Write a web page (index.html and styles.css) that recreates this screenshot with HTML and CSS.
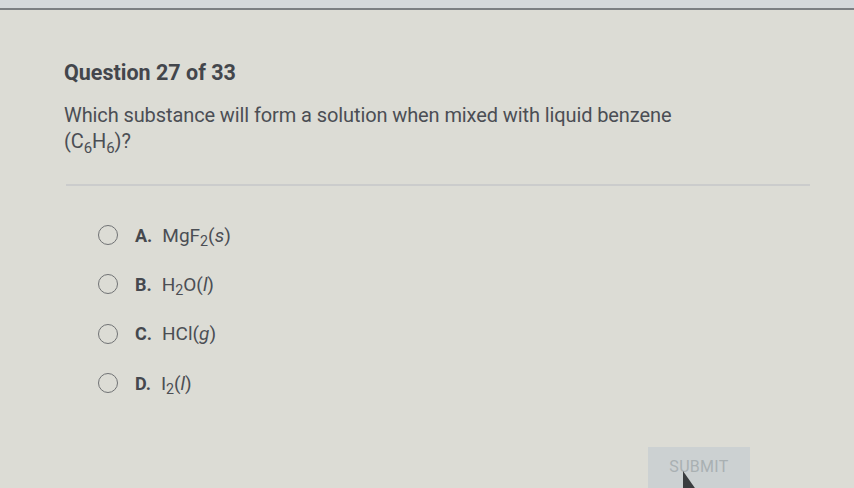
FILE: index.html
```html
<!DOCTYPE html>
<html>
<head>
<meta charset="utf-8">
<link rel="stylesheet" href="styles.css">
</head>
<body>
<div class="topbar"></div>
<main class="page">
  <h1 class="title">Question 27 of 33</h1>
  <p class="prompt">Which substance will form a solution when mixed with liquid benzene<br>(C<sub>6</sub>H<sub>6</sub>)?</p>
  <hr class="divider">
  <ul class="options">
    <li class="option"><span class="radio"></span><span class="letter">A.</span><span class="answer">MgF<sub>2</sub>(<i>s</i>)</span></li>
    <li class="option"><span class="radio"></span><span class="letter">B.</span><span class="answer">H<sub>2</sub>O(<i>l</i>)</span></li>
    <li class="option"><span class="radio"></span><span class="letter">C.</span><span class="answer">HCl(<i>g</i>)</span></li>
    <li class="option"><span class="radio"></span><span class="letter">D.</span><span class="answer">I<sub>2</sub>(<i>l</i>)</span></li>
  </ul>
  <div class="footer">
    <div class="submit-wrap">
      <button class="submit">SUBMIT</button>
      <svg class="cursor" width="22" height="20" viewBox="0 0 22 20"><path d="M2 0 L2 20 L16 20 Z" fill="#3a3d3f"/></svg>
    </div>
  </div>
</main>
</body>
</html>
```

FILE: styles.css
```css
html, body {
  margin: 0;
  padding: 0;
}
body {
  width: 854px;
  height: 488px;
  overflow: hidden;
  background: #dcdcd5;
  font-family: Roboto, "Liberation Sans", sans-serif;
  color: #4a4d52;
}
.topbar {
  height: 8px;
  background: #d4d8db;
  border-bottom: 2px solid #7b7f83;
}
.page {
  padding: 50px 0 0 64px;
}
.title {
  margin: 0;
  font-size: 21.5px;
  line-height: 26px;
  font-weight: 700;
  color: #43464c;
}
.prompt {
  margin: 16px 0 0 0;
  font-size: 20px;
  line-height: 26px;
  color: #4b4e54;
  letter-spacing: -0.1px;
}
sub {
  font-size: 0.75em;
  line-height: 0;
  vertical-align: -0.3em;
}
.divider {
  margin: 30px 0 0 2px;
  width: 744px;
  border: 0;
  border-top: 2px solid #cbcccc;
  height: 0;
}
.options {
  list-style: none;
  margin: 39px 0 0 0;
  padding: 0 0 0 34px;
  display: flex;
  flex-direction: column;
  gap: 29.4px;
}
.option {
  display: flex;
  align-items: center;
  height: 20px;
  font-size: 19px;
}
.radio {
  width: 18px;
  height: 18px;
  border: 1.6px solid #707274;
  border-radius: 50%;
  margin-right: 17px;
  box-sizing: content-box;
}
.letter {
  font-weight: 700;
  font-size: 18px;
  color: #45484e;
  margin-right: 10px;
}
.answer {
  color: #4b4e54;
}
.footer {
  display: flex;
  justify-content: flex-end;
  padding-right: 104px;
  margin-top: 54px;
}
.submit-wrap {
  position: relative;
}
.submit {
  width: 102px;
  height: 42px;
  background: #ccd1d2;
  border: 0;
  font-family: Roboto, "Liberation Sans", sans-serif;
  font-size: 16px;
  letter-spacing: 0.3px;
  color: #a9b0b2;
  padding: 0 0 4px 0;
}
.cursor {
  position: absolute;
  left: 33px;
  top: 24px;
}
```
